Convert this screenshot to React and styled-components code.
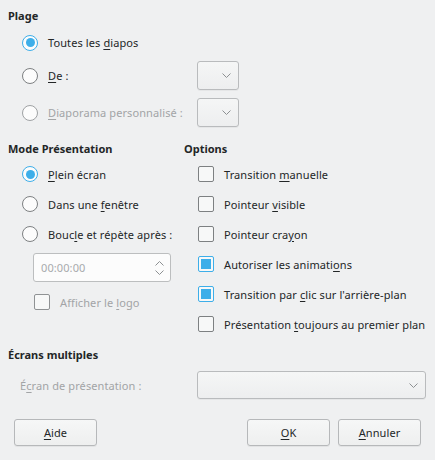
import React from 'react';
import styled, { createGlobalStyle } from 'styled-components';

const Global = createGlobalStyle`
  html, body { margin: 0; padding: 0; background: #eff0f1; }
  body {
    font-family: "Noto Sans", "DejaVu Sans", sans-serif;
    font-size: 11px;
    letter-spacing: 0.1px;
    color: #232627;
  }
  * { box-sizing: border-box; }
`;

const Dialog = styled.div`
  width: 435px;
  height: 460px;
  padding: 8px 9px 0 8px;
  display: flex;
  flex-direction: column;
`;

const Heading = styled.div`
  font-weight: 700;
  line-height: 16px;
  height: 16px;
  white-space: nowrap;
  letter-spacing: 0;
`;

const Mn = styled.span`
  text-decoration: underline;
  text-decoration-thickness: 1px;
  text-underline-offset: 2px;
`;

const RangeGrid = styled.div`
  margin-top: 8px;
  display: grid;
  grid-template-columns: 189px 42px;
  grid-template-rows: 21px 29px 29px;
  row-gap: 8px;
  align-items: center;
`;

const Option = styled.label`
  display: flex;
  align-items: center;
  height: 20px;
  padding-left: ${p => p.$indent ?? 14}px;
  gap: 10px;
  white-space: nowrap;
  color: ${p => (p.$disabled ? '#a2a4a6' : '#232627')};
`;

const RadioMark = styled.span`
  width: 16px;
  height: 16px;
  flex: none;
  border-radius: 50%;
  border: 1px solid ${p => (p.$checked ? '#3daee9' : p.$disabled ? '#9fa2a4' : '#7d8082')};
  background: #fcfcfc;
  position: relative;
  &::after {
    content: '';
    display: ${p => (p.$checked ? 'block' : 'none')};
    position: absolute;
    inset: 2.5px;
    border-radius: 50%;
    background: #3daee9;
  }
`;

const CheckMark = styled.span`
  width: 16px;
  height: 16px;
  flex: none;
  border-radius: 2px;
  border: 1px solid ${p => (p.$checked ? '#3daee9' : p.$disabled ? '#8f9294' : '#7d8082')};
  background: #f7f8f8;
  position: relative;
  &::after {
    content: '';
    display: ${p => (p.$checked ? 'block' : 'none')};
    position: absolute;
    inset: 2px;
    background: #3daee9;
  }
`;

const Combo = styled.div`
  height: ${p => p.$h ?? 29}px;
  border: 1px solid #b9bbbd;
  border-radius: 3px;
  background: linear-gradient(#f5f6f6, #edeeef);
  box-shadow: 0 1px 0 rgba(0, 0, 0, 0.04);
  display: flex;
  align-items: center;
  justify-content: flex-end;
  padding-right: 7px;
`;

const Columns = styled.div`
  margin-top: 14px;
  display: grid;
  grid-template-columns: 176px 1fr;
`;

const List = styled.div`
  margin-top: 7px;
  display: flex;
  flex-direction: column;
  gap: 10px;
`;

const SpinBox = styled.div`
  margin: -1px 0 0 25px;
  width: 138px;
  height: 29px;
  border: 1px solid #bcbebf;
  border-radius: 3px;
  background: #fcfcfc;
  display: flex;
  align-items: center;
  justify-content: space-between;
  padding: 0 6px 0 7px;
  color: #a8aaac;
`;

const SpinArrows = styled.div`
  display: flex;
  flex-direction: column;
  gap: 4px;
`;

const MultiHeading = styled(Heading)`
  margin-top: 13px;
`;

const ScreenRow = styled.div`
  margin-top: 8px;
  display: grid;
  grid-template-columns: 189px 1fr;
  align-items: center;
`;

const ScreenLabel = styled.span`
  padding-left: 12px;
  color: #a2a4a6;
  white-space: nowrap;
`;

const ButtonBar = styled.div`
  margin: 20px 5px 0 6px;
  display: flex;
  gap: 8px;
`;

const Spacer = styled.div`
  flex: 1;
`;

const Button = styled.button`
  width: 83px;
  height: 27px;
  font: inherit;
  letter-spacing: inherit;
  color: #232627;
  border: 1px solid #b6b8ba;
  border-radius: 3px;
  background: linear-gradient(#f6f7f7, #eeefef);
  box-shadow: 0 1px 0 rgba(0, 0, 0, 0.05);
  padding: 0;
`;

const Chevron = ({ up }) => (
  <svg width="9" height="5" viewBox="0 0 9 5" style={{ display: 'block' }}>
    <polyline
      points={up ? '0.5,4.5 4.5,0.5 8.5,4.5' : '0.5,0.5 4.5,4.5 8.5,0.5'}
      fill="none"
      stroke="#8d9092"
      strokeWidth="1"
    />
  </svg>
);

const Radio = ({ checked, disabled, children, indent }) => (
  <Option $disabled={disabled} $indent={indent}>
    <RadioMark $checked={checked} $disabled={disabled} />
    <span>{children}</span>
  </Option>
);

const Check = ({ checked, disabled, children, indent }) => (
  <Option $disabled={disabled} $indent={indent}>
    <CheckMark $checked={checked} $disabled={disabled} />
    <span>{children}</span>
  </Option>
);

export default function App() {
  return (
    <>
      <Global />
      <Dialog>
        <Heading>Plage</Heading>
        <RangeGrid>
          <Radio checked>Toutes les <Mn>d</Mn>iapos</Radio>
          <span />
          <Radio><Mn>D</Mn>e :</Radio>
          <Combo><Chevron /></Combo>
          <Radio disabled><Mn>D</Mn>iaporama personnalisé :</Radio>
          <Combo><Chevron /></Combo>
        </RangeGrid>

        <Columns>
          <div>
            <Heading>Mode Présentation</Heading>
            <List>
              <Radio checked><Mn>P</Mn>lein écran</Radio>
              <Radio>Dans une <Mn>f</Mn>enêtre</Radio>
              <Radio>Bouc<Mn>l</Mn>e et répète après :</Radio>
              <SpinBox>
                <span>00:00:00</span>
                <SpinArrows>
                  <Chevron up />
                  <Chevron />
                </SpinArrows>
              </SpinBox>
              <Check disabled indent={26}>Afficher le <Mn>l</Mn>ogo</Check>
            </List>
          </div>
          <div>
            <Heading>Options</Heading>
            <List>
              <Check>Transition <Mn>m</Mn>anuelle</Check>
              <Check>Pointeur <Mn>v</Mn>isible</Check>
              <Check>Pointeur cra<Mn>y</Mn>on</Check>
              <Check checked>Autoriser les animati<Mn>o</Mn>ns</Check>
              <Check checked>Transition par <Mn>c</Mn>lic sur l'arrière-plan</Check>
              <Check>Présentation <Mn>t</Mn>oujours au premier plan</Check>
            </List>
          </div>
        </Columns>

        <MultiHeading>Écrans multiples</MultiHeading>
        <ScreenRow>
          <ScreenLabel>É<Mn>c</Mn>ran de présentation :</ScreenLabel>
          <Combo $h={28}><Chevron /></Combo>
        </ScreenRow>

        <ButtonBar>
          <Button><Mn>A</Mn>ide</Button>
          <Spacer />
          <Button><Mn>O</Mn>K</Button>
          <Button><Mn>A</Mn>nnuler</Button>
        </ButtonBar>
      </Dialog>
    </>
  );
}
